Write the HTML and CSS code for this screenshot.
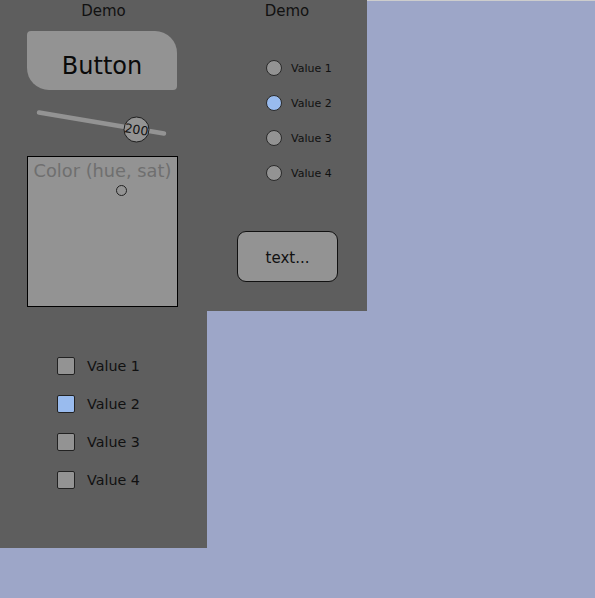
FILE: index.html
```html
<!DOCTYPE html>
<html>
<head>
<meta charset="utf-8">
<link rel="stylesheet" href="styles.css">
</head>
<body>
<div class="app">
  <section class="cell cell-a">
    <div class="title">Demo</div>
    <div class="btn">Button</div>
    <svg class="slider" width="207" height="66" viewBox="0 0 207 66">
      <line x1="39" y1="22.5" x2="164" y2="43.5" stroke="#939393" stroke-width="4.5" stroke-linecap="round"/>
      <circle cx="136.5" cy="39.5" r="12.5" fill="#939393" stroke="#1e1e1e" stroke-width="1"/>
      <text x="136.5" y="44" text-anchor="middle" font-family="DejaVu Sans" font-size="12.5" fill="#111" transform="rotate(9.4 136.5 39.5)">200</text>
    </svg>
    <div class="colorbox">
      <span class="colorlabel">Color (hue, sat)</span>
      <span class="marker"></span>
    </div>
  </section>
  <section class="cell cell-b">
    <div class="title">Demo</div>
    <ul class="radios">
      <li class="radio"><span class="dot"></span>Value 1</li>
      <li class="radio"><span class="dot on"></span>Value 2</li>
      <li class="radio"><span class="dot"></span>Value 3</li>
      <li class="radio"><span class="dot"></span>Value 4</li>
    </ul>
    <div class="textbox">text...</div>
  </section>
  <section class="cell cell-c">
    <ul class="checks">
      <li class="check"><span class="box"></span>Value 1</li>
      <li class="check"><span class="box on"></span>Value 2</li>
      <li class="check"><span class="box"></span>Value 3</li>
      <li class="check"><span class="box"></span>Value 4</li>
    </ul>
  </section>
</div>
</body>
</html>
```

FILE: styles.css
```css
html, body {
  margin: 0;
  padding: 0;
}
body {
  width: 595px;
  height: 598px;
  background: linear-gradient(#cdcdcd 0 1px, #9da6c8 1px);
  font-family: "DejaVu Sans", sans-serif;
  color: #111;
  overflow: hidden;
}
.app {
  display: grid;
  grid-template-columns: 207px 160px;
  grid-template-rows: 311px 237px;
}
.cell {
  background: #5e5e5e;
  position: relative;
}
.cell-c {
  grid-column: 1;
}
.title {
  height: 22px;
  line-height: 22px;
  font-size: 15px;
  text-align: center;
}
.btn {
  margin: 9px 0 0 27px;
  width: 150px;
  height: 59px;
  background: #939393;
  border-radius: 4px 22px 4px 22px;
  font-size: 24px;
  line-height: 71px;
  text-align: center;
  color: #0a0a0a;
  overflow: hidden;
}
.slider {
  display: block;
}
.colorbox {
  position: relative;
  box-sizing: border-box;
  margin-left: 27px;
  width: 151px;
  height: 151px;
  background: #939393;
  border: 1px solid #000;
}
.colorlabel {
  display: block;
  font-size: 17.8px;
  line-height: 20px;
  margin-top: 4px;
  text-align: center;
  color: #6f6f6f;
  white-space: nowrap;
}
.marker {
  position: absolute;
  left: 88px;
  top: 28px;
  width: 9px;
  height: 9px;
  border: 1px solid #222;
  border-radius: 50%;
}
.radios {
  list-style: none;
  margin: 38px 0 0 59px;
  padding: 0;
  display: flex;
  flex-direction: column;
  gap: 19px;
}
.radio {
  display: flex;
  align-items: center;
  height: 16px;
  font-size: 11px;
  gap: 9px;
}
.dot {
  box-sizing: border-box;
  width: 16px;
  height: 16px;
  border-radius: 50%;
  background: #939393;
  border: 1px solid #2a2a2a;
}
.dot.on {
  background: #99bbee;
}
.textbox {
  box-sizing: border-box;
  margin: 50px 0 0 30px;
  width: 101px;
  height: 51px;
  border: 1px solid #111;
  border-radius: 9px;
  background: #939393;
  font-size: 15px;
  line-height: 53px;
  text-align: center;
  overflow: hidden;
}
.checks {
  list-style: none;
  margin: 46px 0 0 57px;
  padding: 0;
  display: flex;
  flex-direction: column;
  gap: 20px;
}
.check {
  display: flex;
  align-items: center;
  height: 18px;
  font-size: 14.3px;
  gap: 12px;
}
.box {
  box-sizing: border-box;
  width: 18px;
  height: 18px;
  border-radius: 2px;
  background: #939393;
  border: 1px solid #222;
}
.box.on {
  background: #99bbee;
}
```
